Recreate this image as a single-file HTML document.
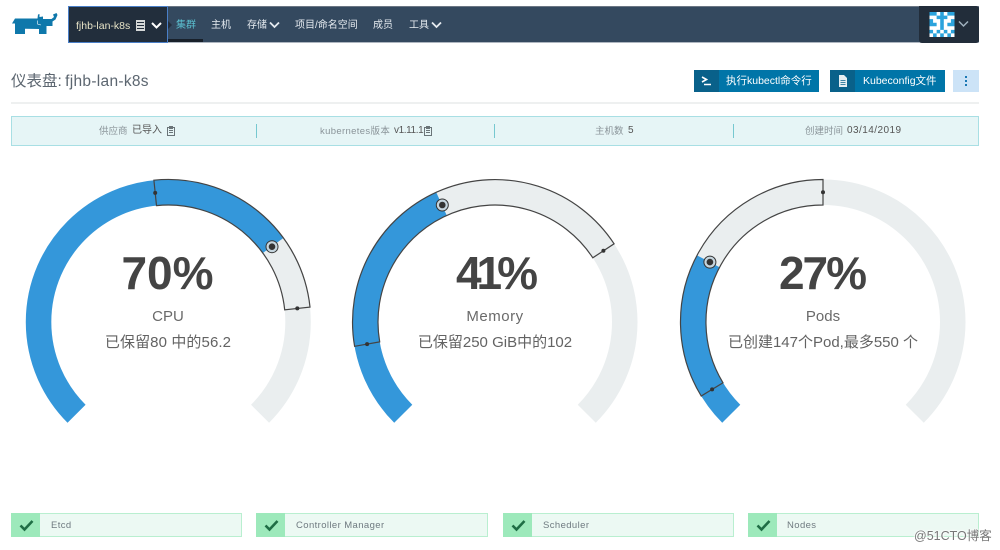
<!DOCTYPE html>
<html><head><meta charset="utf-8">
<style>
*{box-sizing:border-box}
html,body{margin:0;padding:0;background:#fff}
body{width:1000px;height:550px;position:relative;overflow:hidden;font-family:"Liberation Sans","Noto Sans CJK SC",sans-serif;color:#555;filter:blur(.3px)}
.a{position:absolute;white-space:nowrap}
.nav{left:68px;top:6px;width:911px;height:37px;background:#34495f;border-top:1px solid #6b7684;border-bottom:1px solid #aeb6c0}
.cl{left:68px;top:6px;width:100px;height:37px;background:#222e3c;border:1px solid #4a7fc8}
.n{top:18px;font-size:10px;line-height:14px;color:#e6ebf0}
.btn{top:70px;height:22px;background:#0075a8}
.btn i{position:absolute;left:0;top:0;width:25px;height:22px;background:#09618a}
.btn span{position:absolute;top:4px;font-size:10.5px;line-height:14px;color:#fff}
.info{left:11px;top:116px;width:968px;height:30px;background:#e6f5f6;border:1px solid #a8dfe4}
.d{top:124px;width:1px;height:14px;background:#76c8d0}
.l{top:125px;font-size:9.5px;line-height:14px;color:#8a9499}
.v{top:124px;font-size:10px;line-height:14px;color:#555}
.st{top:513px;height:24px;background:#ecf9f3;border:1px solid #b9efd0}
.st i{position:absolute;left:-1px;top:-1px;width:29px;height:24px;background:#9de9bb}
.st svg{position:absolute;left:7px;top:5px}
.st span{position:absolute;left:39px;top:6px;font-size:9.5px;line-height:12px;color:#6f7a80;letter-spacing:.4px}
.big{top:245px;width:200px;text-align:center;font-size:46px;line-height:56px;font-weight:bold;color:#444}
.nm{top:308px;width:200px;text-align:center;font-size:15px;line-height:18px;color:#6a6a6a}
.ds{top:334px;width:300px;text-align:center;font-size:15px;line-height:18px;color:#636363}
</style></head>
<body>
<svg class="a" style="left:0;top:0" width="70" height="44"><path fill="#0f78ab" d="M12 23.5 15 18.5H37.5L38 14.5 39.5 14V17L43 16.5V19H51.5L54 17 53 14.5 56.5 13 57.5 15 55.5 19.5 52.5 21.5V26H46.5V34H39V29L25 28.7V34H15V23.5Z"/><path fill="none" stroke="#fff" stroke-width=".6" d="M37.5 20.5V24L41 25"/></svg>
<div class="a nav"></div>
<div class="a cl"></div>
<div class="a n" style="left:76px;top:19px;font-size:10.5px;color:#e8e4c8">fjhb-lan-k8s</div>
<svg class="a" style="left:135px;top:18px" width="32" height="14"><path fill="#d5d8d8" d="M1 2h9v11H1z"/><path stroke="#222e3c" d="M2 4.5h7M2 7.5h7M2 10.5h7"/><path fill="none" stroke="#fff" stroke-width="2" d="M17 5l4.5 4.5L26 5"/></svg>
<svg class="a" style="left:168px;top:20px" width="6" height="10"><path fill="#222e3c" d="M0 1l4 4-4 4z"/></svg>
<div class="a" style="left:168px;top:39px;width:35px;height:3px;background:#18202a"></div>
<div class="a n" style="left:176px;top:19px;color:#5bc0d0">集群</div>
<div class="a n" style="left:211px;top:19px">主机</div>
<div class="a n" style="left:247px;top:19px">存储</div>
<svg class="a" style="left:269px;top:21px" width="12" height="9"><path fill="none" stroke="#e6ebf0" stroke-width="1.8" d="M1 1.5l4.5 4.5L10 1.5"/></svg>
<div class="a n" style="left:295px;top:19px">项目/命名空间</div>
<div class="a n" style="left:373px;top:19px">成员</div>
<div class="a n" style="left:409px;top:19px">工具</div>
<svg class="a" style="left:431px;top:21px" width="12" height="9"><path fill="none" stroke="#e6ebf0" stroke-width="1.8" d="M1 1.5l4.5 4.5L10 1.5"/></svg>
<div class="a" style="left:919px;top:6px;width:60px;height:37px;background:#222d3a;border-radius:0 3px 3px 3px"></div>
<svg class="a" style="left:929px;top:12px" width="26" height="25" viewBox="0 0 7 7"><rect width="7" height="7" fill="#fff"/><path fill="#2ba3dc" d="M0 0h2v1H0zM3 0h1v1H3zM5 0h2v1H5zM2 1h3v1H2zM0 2h1v1H0zM3 2h1v3H3zM6 2h1v1H6zM0 3h2v1H0zM5 3h2v1H5zM0 5h1v1H0zM2 5h1v1H2zM4 5h1v1H4zM6 5h1v1H6zM1 6h1v1H1zM3 6h1v1H3zM5 6h1v1H5z"/></svg>
<svg class="a" style="left:958px;top:20px" width="12" height="9"><path fill="none" stroke="#9fb0bd" stroke-width="1.5" d="M1 1.5l4.5 4.5L10 1.5"/></svg>

<div class="a" style="left:11px;top:73px;font-size:15.5px;line-height:18px;color:#5c6670">仪表盘: <span style="letter-spacing:.3px;margin-left:-1px">fjhb-lan-k8s</span></div>
<div class="a btn" style="left:694px;width:125px"><i></i><span style="left:32px">执行kubectl命令行</span>
<svg class="a" style="left:7px;top:6px" width="12" height="10"><path fill="none" stroke="#fff" stroke-width="1.6" d="M1 1l4.5 2.5L1 6M3 8.5h7"/></svg></div>
<div class="a btn" style="left:830px;width:115px"><i></i><span style="left:33px">Kubeconfig文件</span>
<svg class="a" style="left:8px;top:5px" width="10" height="12"><path fill="#e6eef2" d="M1 0h5l3 3v9H1z"/><path stroke="#09618a" stroke-width=".8" d="M2.5 5.5h5M2.5 7.5h5M2.5 9.5h5"/></svg></div>
<div class="a" style="left:953px;top:70px;width:26px;height:22px;background:#cce3f7"></div>
<svg class="a" style="left:964px;top:75px" width="4" height="12"><path fill="#1a78b4" d="M1 1h2v2H1zM1 5h2v2H1zM1 9h2v2H1z"/></svg>
<div class="a" style="left:11px;top:102px;width:968px;height:2px;background:#eef0f0"></div>

<div class="a info"></div>
<div class="a d" style="left:256px"></div><div class="a d" style="left:494px"></div><div class="a d" style="left:733px"></div>
<div class="a l" style="left:99px">供应商</div><div class="a v" style="left:132px">已导入</div>
<svg class="a" style="left:166px;top:125px" width="10" height="12"><path fill="none" stroke="#6a7478" d="M1.5 2.5h7v8h-7zM3.5 1.5h3v2h-3z"/><path stroke="#6a7478" d="M3 5.5h4M3 7.5h4"/></svg>
<div class="a l" style="left:320px;letter-spacing:.35px">kubernetes版本</div><div class="a v" style="left:394px;letter-spacing:-.4px">v1.11.1</div>
<svg class="a" style="left:423px;top:125px" width="10" height="12"><path fill="none" stroke="#6a7478" d="M1.5 2.5h7v8h-7zM3.5 1.5h3v2h-3z"/><path stroke="#6a7478" d="M3 5.5h4M3 7.5h4"/></svg>
<div class="a l" style="left:595px">主机数</div><div class="a v" style="left:628px">5</div>
<div class="a l" style="left:805px">创建时间</div><div class="a v" style="left:847px;letter-spacing:.45px">03/14/2019</div>

<svg class="a" style="left:0;top:0" width="1000" height="550" fill="none">
<g transform="translate(168.3 322)">
<path stroke="#eaeeef" stroke-width="25.5" d="M-91.75 91.75A129.75 129.75 0 1 1 91.75 91.75"/>
<path stroke="#3497da" stroke-width="25.5" pathLength="100" stroke-dasharray="70 100" d="M-91.75 91.75A129.75 129.75 0 1 1 91.75 91.75"/>
<path stroke="#444" stroke-width="1.2" d="M-14.4 -141.8A142.5 142.5 0 0 1 141.7 -14.9L116.4 -12.2A117 117 0 0 0 -11.8 -116.4Z"/>
<circle cx="-13.1" cy="-129.1" r="2" fill="#333"/><circle cx="129" cy="-13.6" r="2" fill="#333"/>
<circle cx="103.7" cy="-75.3" r="6" stroke="#333" stroke-width="1" fill="#c5d5de"/><circle cx="103.7" cy="-75.3" r="3.3" fill="#333"/>
</g>
<g transform="translate(495 322)">
<path stroke="#eaeeef" stroke-width="25.5" d="M-91.75 91.75A129.75 129.75 0 1 1 91.75 91.75"/>
<path stroke="#3497da" stroke-width="25.5" pathLength="100" stroke-dasharray="41 100" d="M-91.75 91.75A129.75 129.75 0 1 1 91.75 91.75"/>
<path stroke="#444" stroke-width="1.2" d="M-140.4 24.3A142.5 142.5 0 0 1 119.1 -78.2L97.8 -64.2A117 117 0 0 0 -115.3 19.9Z"/>
<circle cx="-127.9" cy="22.1" r="2" fill="#333"/><circle cx="108.4" cy="-71.2" r="2" fill="#333"/>
<circle cx="-52.7" cy="-117" r="6" stroke="#333" stroke-width="1" fill="#c5d5de"/><circle cx="-52.7" cy="-117" r="3.3" fill="#333"/>
</g>
<g transform="translate(823 322)">
<path stroke="#eaeeef" stroke-width="25.5" d="M-91.75 91.75A129.75 129.75 0 1 1 91.75 91.75"/>
<path stroke="#3497da" stroke-width="25.5" pathLength="100" stroke-dasharray="27 100" d="M-91.75 91.75A129.75 129.75 0 1 1 91.75 91.75"/>
<path stroke="#444" stroke-width="1.2" d="M-121.8 74A142.5 142.5 0 0 1 0 -142.5V-117A117 117 0 0 0 -100 60.8Z"/>
<circle cx="-110.9" cy="67.4" r="2" fill="#333"/><circle cx="0" cy="-129.75" r="2" fill="#333"/>
<circle cx="-113.1" cy="-59.9" r="6" stroke="#333" stroke-width="1" fill="#c5d5de"/><circle cx="-113.1" cy="-59.9" r="3.3" fill="#333"/>
</g>
</svg>

<div class="a big" style="left:67.5px">70%</div>
<div class="a nm" style="left:68px">CPU</div>
<div class="a ds" style="left:18px;letter-spacing:.1px">已保留80 中的56.2</div>
<div class="a big" style="left:394.5px;letter-spacing:-5px">41%</div>
<div class="a nm" style="left:395px;letter-spacing:.5px">Memory</div>
<div class="a ds" style="left:345px">已保留250 GiB中的102</div>
<div class="a big" style="left:722px;letter-spacing:-2px">27%</div>
<div class="a nm" style="left:723px">Pods</div>
<div class="a ds" style="left:673px">已创建147个Pod,最多550 个</div>

<div class="a st" style="left:11px;width:231px"><i></i><svg width="15" height="13"><path fill="none" stroke="#1f6e45" stroke-width="2.6" d="M1.5 6.5l4 4L13.5 2"/></svg><span>Etcd</span></div>
<div class="a st" style="left:256px;width:232px"><i></i><svg width="15" height="13"><path fill="none" stroke="#1f6e45" stroke-width="2.6" d="M1.5 6.5l4 4L13.5 2"/></svg><span>Controller Manager</span></div>
<div class="a st" style="left:503px;width:231px"><i></i><svg width="15" height="13"><path fill="none" stroke="#1f6e45" stroke-width="2.6" d="M1.5 6.5l4 4L13.5 2"/></svg><span>Scheduler</span></div>
<div class="a st" style="left:748px;width:231px"><i></i><svg width="15" height="13"><path fill="none" stroke="#1f6e45" stroke-width="2.6" d="M1.5 6.5l4 4L13.5 2"/></svg><span style="left:38px">Nodes</span></div>
<div class="a" style="left:914px;top:529px;font-size:12.5px;line-height:15px;color:#777;text-shadow:0 0 2px #fff,0 0 2px #fff,0 0 2px #fff">@51CTO博客</div>
</body></html>
